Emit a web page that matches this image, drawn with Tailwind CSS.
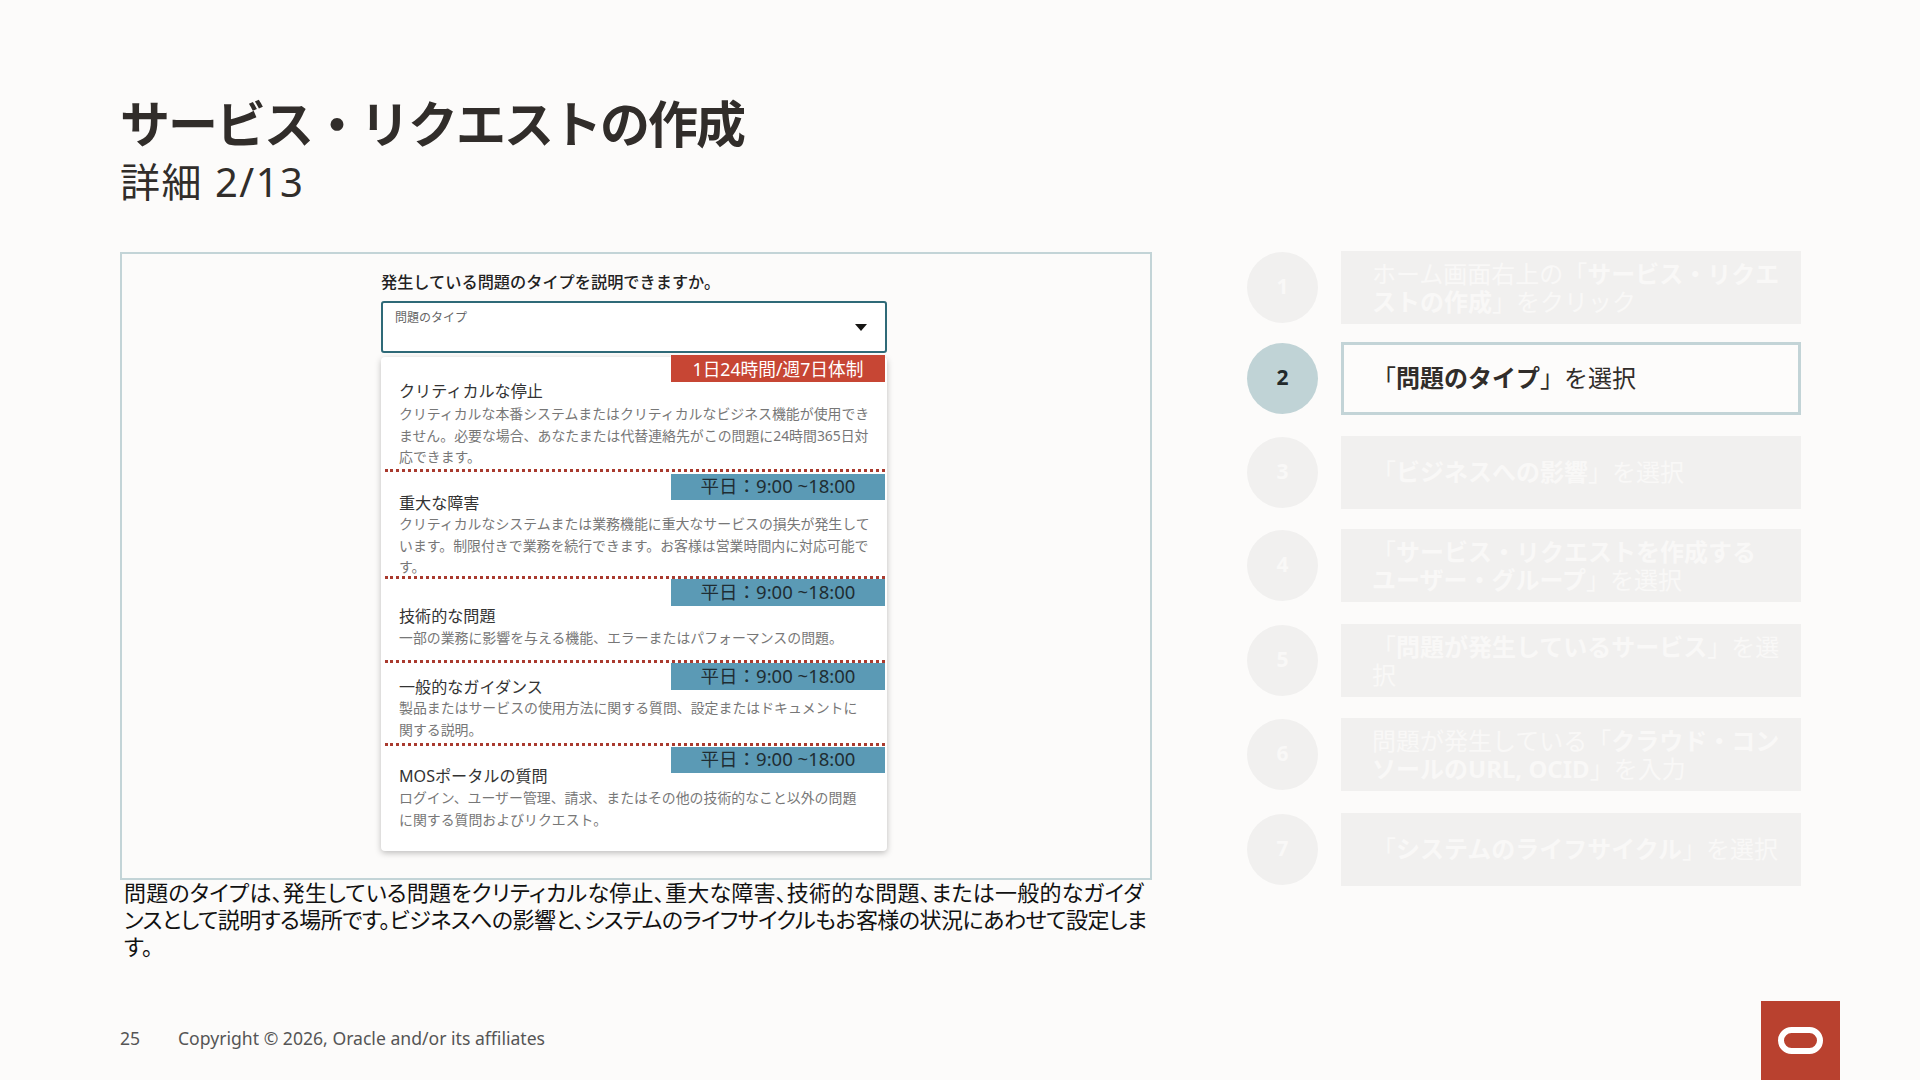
<!DOCTYPE html>
<html lang="ja">
<head>
  <meta charset="UTF-8">
  <title>サービス・リクエストの作成</title>
  <script src="https://cdn.jsdelivr.net/npm/@tailwindcss/browser@4"></script>
</head>
<body class="bg-[#fcfbfa]">
<div class="w-[1920px] h-[1080px] overflow-hidden flex flex-col pl-[120px] pr-[80px] text-[#312d2a] font-['Noto_Sans','Noto_Sans_CJK_JP',sans-serif]">
  <!-- Title -->
  <h1 class="pt-[99px] text-[50px] leading-[50px] tracking-[-2px] font-bold">サービス・リクエストの作成</h1>
  <p class="mt-[11px] text-[40px] leading-[44px] tracking-[1.5px]">詳細 2/13</p>

  <div class="mt-[48px] flex items-start">
    <!-- Left: screenshot frame + note -->
    <div class="w-[1032px] shrink-0">
      <div class="h-[628px] border-2 border-[#c3d4d7] pl-[259px] pt-[16px]">
        <p class="text-[16.2px] leading-[24px] font-medium text-[#222]">発生している問題のタイプを説明できますか。</p>
        <div class="mt-[7px] w-[506px] h-[52px] bg-white border-2 border-[#2f6a78] rounded-[3px] relative pl-[12px] pt-[8px]">
          <p class="text-[12px] leading-[14px] text-[#666]">問題のタイプ</p>
          <svg class="absolute right-[18px] top-[21px]" width="12" height="7" viewBox="0 0 12 7"><path d="M0 0h12L6 7z" fill="#161513"/></svg>
        </div>
        <div class="mt-[4px] w-[506px] h-[494px] bg-white rounded-[4px] shadow-[0_2px_6px_rgba(0,0,0,0.25)] relative">
          <div class="relative ml-[4px] mr-[2px] pl-[14px] h-[115px] pt-[25px] border-b-[3px] border-dotted border-[#a93a2e]">
            <div class="absolute right-0 -top-[2px] w-[214px] h-[27px] bg-[#c74634] text-white text-[17.7px] leading-[28px] text-center">1日24時間/週7日体制</div>
            <h3 class="text-[16.1px] leading-[18px] text-[#333] mb-[3px]">クリティカルな停止</h3>
            <p class="text-[13.9px] leading-[21.7px] text-[#777]">クリティカルな本番システムまたはクリティカルなビジネス機能が使用でき<br>ません。必要な場合、あなたまたは代替連絡先がこの問題に24時間365日対<br>応できます。</p>
          </div>
          <div class="relative ml-[4px] mr-[2px] pl-[14px] h-[107px] pt-[22px] border-b-[3px] border-dotted border-[#a93a2e]">
            <div class="absolute right-0 top-[2px] w-[214px] h-[26px] bg-[#5b9ab5] text-[#1f2d33] text-[18.5px] leading-[24px] text-center">平日：9:00 ~18:00</div>
            <h3 class="text-[16.1px] leading-[18px] text-[#333] mb-[1px]">重大な障害</h3>
            <p class="text-[13.9px] leading-[21.7px] text-[#777]">クリティカルなシステムまたは業務機能に重大なサービスの損失が発生して<br>います。制限付きで業務を続行できます。お客様は営業時間内に対応可能で<br>す。</p>
          </div>
          <div class="relative ml-[4px] mr-[2px] pl-[14px] h-[84px] pt-[28px] border-b-[3px] border-dotted border-[#a93a2e]">
            <div class="absolute right-0 top-0 w-[214px] h-[27px] bg-[#5b9ab5] text-[#1f2d33] text-[18.5px] leading-[25px] text-center">平日：9:00 ~18:00</div>
            <h3 class="text-[16.1px] leading-[18px] text-[#333] mb-[2px]">技術的な問題</h3>
            <p class="text-[13.9px] leading-[22px] text-[#777]">一部の業務に影響を与える機能、エラーまたはパフォーマンスの問題。</p>
          </div>
          <div class="relative ml-[4px] mr-[2px] pl-[14px] h-[83px] pt-[15px] border-b-[3px] border-dotted border-[#a93a2e]">
            <div class="absolute right-0 top-0 w-[214px] h-[27px] bg-[#5b9ab5] text-[#1f2d33] text-[18.5px] leading-[25px] text-center">平日：9:00 ~18:00</div>
            <h3 class="text-[16.1px] leading-[18px] text-[#333] mb-[1px]">一般的なガイダンス</h3>
            <p class="text-[13.9px] leading-[22px] text-[#777]">製品またはサービスの使用方法に関する質問、設定またはドキュメントに<br>関する説明。</p>
          </div>
          <div class="relative ml-[4px] mr-[2px] pl-[14px] pt-[21px]">
            <div class="absolute right-0 top-[1px] w-[214px] h-[26px] bg-[#5b9ab5] text-[#1f2d33] text-[18.5px] leading-[24px] text-center">平日：9:00 ~18:00</div>
            <h3 class="text-[16.1px] leading-[18px] text-[#333] mb-[2px]">MOSポータルの質問</h3>
            <p class="text-[13.9px] leading-[22px] text-[#777]">ログイン、ユーザー管理、請求、またはその他の技術的なこと以外の問題<br>に関する質問およびリクエスト。</p>
          </div>
        </div>
      </div>
      <div class="pl-[4px] -mt-[1px] text-[22px] leading-[27px] text-[#111] [font-feature-settings:'palt']">
        <p class="tracking-[0.22px]">問題のタイプは、発生している問題をクリティカルな停止、重大な障害、技術的な問題、または一般的なガイダ</p>
        <p class="tracking-[-0.53px]">ンスとして説明する場所です。ビジネスへの影響と、システムのライフサイクルもお客様の状況にあわせて設定しま</p>
        <p>す。</p>
      </div>
    </div>

    <!-- Right: steps -->
    <div class="ml-[95px] -mt-[1px] w-[555px] flex flex-col">
      <div class="flex items-center gap-[23px]">
        <div class="w-[71px] h-[71px] pb-[2px] rounded-full bg-[#f1f0ef] text-[#f9f8f7] font-bold text-[21px] flex items-center justify-center">1</div>
        <div class="w-[460px] h-[73px] bg-[#f1f0ef] text-[#f9f8f7] pl-[31px] flex items-center text-[24px] leading-[28px]"><p>ホーム画面右上の「<b>サービス・リクエ<br>ストの作成</b>」をクリック</p></div>
      </div>
      <div class="mt-[18px] flex items-center gap-[23px]">
        <div class="w-[71px] h-[71px] pb-[2px] rounded-full bg-[#c0d3d6] text-[#22292b] font-bold text-[21px] flex items-center justify-center">2</div>
        <div class="w-[460px] h-[73px] bg-[#fdfcfb] border-[3px] border-[#c3d4d7] pl-[28px] pb-[2px] flex items-center text-[24px] leading-[28px]"><p>「<b>問題のタイプ</b>」を選択</p></div>
      </div>
      <div class="mt-[21px] flex items-center gap-[23px]">
        <div class="w-[71px] h-[71px] pb-[2px] rounded-full bg-[#f1f0ef] text-[#f9f8f7] font-bold text-[21px] flex items-center justify-center">3</div>
        <div class="w-[460px] h-[73px] bg-[#f1f0ef] text-[#f9f8f7] pl-[31px] pb-[2px] flex items-center text-[24px] leading-[28px]"><p>「<b>ビジネスへの影響</b>」を選択</p></div>
      </div>
      <div class="mt-[20px] flex items-center gap-[23px]">
        <div class="w-[71px] h-[71px] pb-[2px] rounded-full bg-[#f1f0ef] text-[#f9f8f7] font-bold text-[21px] flex items-center justify-center">4</div>
        <div class="w-[460px] h-[73px] bg-[#f1f0ef] text-[#f9f8f7] pl-[31px] flex items-center text-[24px] leading-[28px]"><p>「<b>サービス・リクエストを作成する<br>ユーザー・グループ</b>」を選択</p></div>
      </div>
      <div class="mt-[22px] flex items-center gap-[23px]">
        <div class="w-[71px] h-[71px] pb-[2px] rounded-full bg-[#f1f0ef] text-[#f9f8f7] font-bold text-[21px] flex items-center justify-center">5</div>
        <div class="w-[460px] h-[73px] bg-[#f1f0ef] text-[#f9f8f7] pl-[31px] flex items-center text-[24px] leading-[28px]"><p>「<b>問題が発生しているサービス</b>」を選<br>択</p></div>
      </div>
      <div class="mt-[21px] flex items-center gap-[23px]">
        <div class="w-[71px] h-[71px] pb-[2px] rounded-full bg-[#f1f0ef] text-[#f9f8f7] font-bold text-[21px] flex items-center justify-center">6</div>
        <div class="w-[460px] h-[73px] bg-[#f1f0ef] text-[#f9f8f7] pl-[31px] flex items-center text-[24px] leading-[28px]"><p>問題が発生している「<b>クラウド・コン<br>ソールのURL, OCID</b>」を入力</p></div>
      </div>
      <div class="mt-[22px] flex items-center gap-[23px]">
        <div class="w-[71px] h-[71px] pb-[2px] rounded-full bg-[#f1f0ef] text-[#f9f8f7] font-bold text-[21px] flex items-center justify-center">7</div>
        <div class="w-[460px] h-[73px] bg-[#f1f0ef] text-[#f9f8f7] pl-[31px] pb-[2px] flex items-center text-[24px] leading-[28px]"><p>「<b>システムのライフサイクル</b>」を選択</p></div>
      </div>
    </div>
  </div>

  <!-- Footer -->
  <div class="mt-auto flex items-center justify-between h-[79px]">
    <div class="flex items-center text-[17.6px] text-[#555] pb-[5px]">
      <span class="w-[58px]">25</span>
      <span>Copyright © 2026, Oracle and/or its affiliates</span>
    </div>
    <div class="w-[79px] h-[79px] bg-[#b9412f] flex items-center justify-center">
      <div class="w-[45px] h-[27px] rounded-full border-[6px] border-white"></div>
    </div>
  </div>
</div>
</body>
</html>
